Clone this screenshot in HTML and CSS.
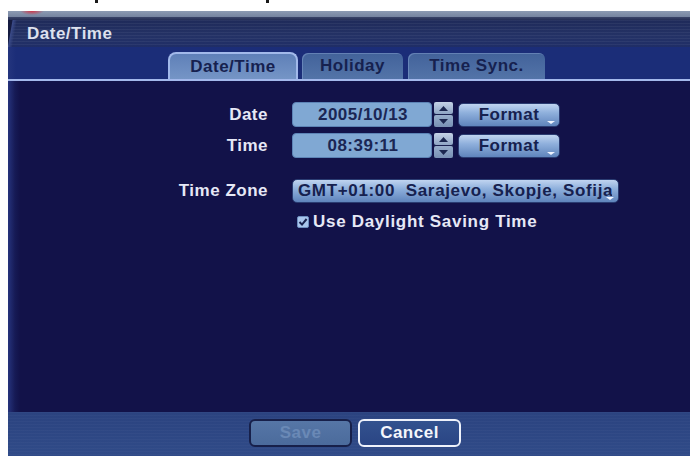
FILE: index.html
```html
<!DOCTYPE html>
<html lang="en">
<head>
<meta charset="utf-8">
<title>Date/Time</title>
<link rel="stylesheet" href="styles.css">
</head>
<body>
<div class="page-strip">
  <span class="ink ink-a"></span>
  <span class="ink ink-b"></span>
</div>
<div class="panel">
  <div class="chrome"></div>
  <div class="chrome-shadow"></div>
  <div class="titlebar">Date/Time</div>
  <div class="tabbar">
    <div class="tab tab-active">Date/Time</div>
    <div class="tab tab-holiday">Holiday</div>
    <div class="tab tab-sync">Time Sync.</div>
  </div>
  <div class="rule"></div>
  <div class="content">
    <div class="form">
      <div class="label">Date</div>
      <div class="controls">
        <div class="field field-value">2005/10/13</div>
        <div class="spinner">
          <div class="spin spin-up"><svg width="9" height="5" viewBox="0 0 9 5"><path d="M0 5 L4.5 0 L9 5 Z" fill="#1c2750"/></svg></div>
          <div class="spin spin-down"><svg width="9" height="5" viewBox="0 0 9 5"><path d="M0 0 L4.5 5 L9 0 Z" fill="#1c2750"/></svg></div>
        </div>
        <div class="button-format drop">Format</div>
      </div>

      <div class="label">Time</div>
      <div class="controls">
        <div class="field field-value">08:39:11</div>
        <div class="spinner">
          <div class="spin spin-up"><svg width="9" height="5" viewBox="0 0 9 5"><path d="M0 5 L4.5 0 L9 5 Z" fill="#1c2750"/></svg></div>
          <div class="spin spin-down"><svg width="9" height="5" viewBox="0 0 9 5"><path d="M0 0 L4.5 5 L9 0 Z" fill="#1c2750"/></svg></div>
        </div>
        <div class="button-format drop">Format</div>
      </div>

      <div class="label label-zone">Time Zone</div>
      <div class="controls controls-zone">
        <div class="zone drop"><span class="zone-text">GMT+01:00  Sarajevo, Skopje, Sofija</span></div>
      </div>

      <div class="label"></div>
      <div class="controls controls-check">
        <span class="check"><svg width="12" height="12" viewBox="0 0 12 12"><rect x="0.5" y="0.5" width="11" height="11" rx="1.5" fill="#a9c6ec" stroke="#6e8fc0"/><path d="M2.5 6 L5 8.6 L9.6 3" fill="none" stroke="#18224e" stroke-width="2"/></svg></span>
        <span class="check-text">Use Daylight Saving Time</span>
      </div>
    </div>
  </div>
  <div class="footer">
    <div class="btn btn-save">Save</div>
    <div class="btn btn-cancel">Cancel</div>
  </div>
</div>
</body>
</html>
```

FILE: styles.css
```css
* {
  box-sizing: border-box;
}

html, body {
  margin: 0;
  padding: 0;
  background: #ffffff;
  width: 690px;
  height: 456px;
  overflow: hidden;
  font-family: "Liberation Sans", Arial, sans-serif;
  font-weight: bold;
  font-size: 17px;
  letter-spacing: 0.5px;
}

/* white page strip above the dialog */
.page-strip {
  height: 11px;
  display: flex;
  align-items: flex-start;
}

.ink {
  display: block;
  background: #1a1a1a;
  height: 3px;
}

.ink-a {
  width: 3px;
  margin-left: 95px;
}

.ink-b {
  width: 3px;
  margin-left: 168px;
}

.panel {
  margin-left: 8px;
  height: 445px;
  display: flex;
  flex-direction: column;
}

/* metallic top edge with the red lamp */
.chrome {
  height: 6px;
  background:
    radial-gradient(ellipse 12px 4px at 24px 0px, rgba(214, 40, 60, 0.9), rgba(214, 40, 60, 0) 100%),
    linear-gradient(180deg, #8c9ab2 0%, #75839f 100%);
}

.chrome-shadow {
  height: 3px;
  background: linear-gradient(180deg, #3a4468, #252d55);
}

.titlebar {
  height: 27px;
  padding-left: 19px;
  display: flex;
  align-items: center;
  color: #dde1ee;
  background:
    linear-gradient(100deg, #151b40 0, #151b40 4px, #3a4a88 5px, rgba(58, 74, 136, 0) 9px),
    repeating-linear-gradient(180deg, rgba(255, 255, 255, 0.05) 0 1px, rgba(0, 0, 0, 0) 1px 3px),
    linear-gradient(180deg, #1f2a5a 0%, #243266 60%, #1f2d66 100%);
}

.tabbar {
  height: 32px;
  background: linear-gradient(90deg, #24357e 0, #1b2d78 8px);
  display: flex;
  align-items: flex-end;
  padding-left: 160px;
  gap: 4px;
}

.tab {
  height: 26px;
  display: flex;
  align-items: center;
  justify-content: center;
  color: #16214f;
  border-radius: 6px 6px 0 0;
  background: linear-gradient(180deg, #42629a 0%, #5374a8 100%);
  box-shadow: inset 1px 1px 0 rgba(160, 185, 230, 0.35);
}

.tab-active {
  width: 130px;
  height: 27px;
  border: 2px solid #a2b9ea;
  border-bottom: none;
  border-radius: 8px 8px 0 0;
  background: linear-gradient(180deg, #5f80b8 0%, #7595c6 100%);
  box-shadow: none;
}

.tab-holiday {
  width: 101px;
}

.tab-sync {
  width: 137px;
  margin-left: 1px;
}

.rule {
  height: 2px;
  background: #a4b9ec;
}

.content {
  height: 331px;
  background: linear-gradient(90deg, #26337c 0, #161a55 7px, #121249 12px);
  padding-top: 21px;
}

.form {
  display: grid;
  grid-template-columns: 259px 1fr;
  column-gap: 25px;
  row-gap: 6px;
  align-items: center;
}

.label {
  text-align: right;
  color: #e6e8f6;
  margin-right: -1px;
}

.label-zone {
  margin-top: 15px;
}

.controls {
  display: flex;
  align-items: center;
  height: 25px;
}

.controls-zone {
  margin-top: 15px;
  height: 24px;
}

.controls-check {
  height: 14px;
  margin-top: 6px;
  padding-left: 5px;
}

.field {
  width: 140px;
  height: 25px;
  border-radius: 4px;
  background: #80a8d3;
  border: 1px solid #5d84b6;
  color: #1a2654;
  display: flex;
  align-items: center;
  justify-content: center;
  padding-left: 2px;
}

.spinner {
  width: 19px;
  height: 25px;
  margin-left: 2px;
  display: flex;
  flex-direction: column;
  gap: 1px;
  background: #1a2050;
}

.spin {
  flex: 1;
  display: flex;
  align-items: center;
  justify-content: center;
  border-radius: 2px;
}

.spin-up {
  background: linear-gradient(180deg, #c4d2e6, #8ea4c4);
}

.spin-down {
  background: linear-gradient(180deg, #98aecc, #7890b4);
}

.button-format {
  width: 102px;
  height: 24px;
  margin-left: 5px;
  border-radius: 5px;
  border: 1px solid #2a3c72;
  background: linear-gradient(180deg, #c0d4f0 0%, #8fb0dc 40%, #5f84bc 100%);
  color: #16214f;
  display: flex;
  align-items: center;
  justify-content: center;
}

/* small drop-down mark in the lower right corner */
.drop {
  position: relative;
}

.drop::after {
  content: "";
  position: absolute;
  right: 4px;
  bottom: 2px;
  width: 0;
  height: 0;
  border-left: 4px solid transparent;
  border-right: 4px solid transparent;
  border-top: 3px solid #eef3ff;
}

.zone {
  width: 327px;
  height: 24px;
  border-radius: 5px;
  border: 1px solid #2a3c72;
  background: linear-gradient(180deg, #c0d4f0 0%, #8fb0dc 40%, #5f84bc 100%);
  color: #16214f;
  display: flex;
  align-items: center;
  padding: 0 6px 0 5px;
  overflow: hidden;
  letter-spacing: 0.65px;
}

.zone-text {
  white-space: pre;
  overflow: hidden;
  display: block;
  width: 100%;
}

.check {
  display: flex;
  width: 12px;
  height: 12px;
}

.check-text {
  margin-left: 4px;
  color: #e6e8f6;
  letter-spacing: 0.7px;
}

.footer {
  height: 44px;
  background:
    repeating-linear-gradient(180deg, rgba(255, 255, 255, 0.025) 0 1px, rgba(0, 0, 0, 0) 1px 3px),
    linear-gradient(180deg, #2b4380 0%, #304b88 100%);
  display: flex;
  align-items: flex-start;
  padding-top: 7px;
  padding-left: 241px;
  gap: 6px;
}

.btn {
  width: 103px;
  height: 28px;
  border-radius: 6px;
  display: flex;
  align-items: center;
  justify-content: center;
}

.btn-save {
  border: 2px solid #17204a;
  background: linear-gradient(180deg, #5676a6 0%, #4b6b9c 100%);
  color: #6a89b6;
}

.btn-cancel {
  border: 2px solid #eef2fb;
  background: linear-gradient(180deg, #33528f 0%, #2a4584 100%);
  color: #f4f6fc;
}
```
